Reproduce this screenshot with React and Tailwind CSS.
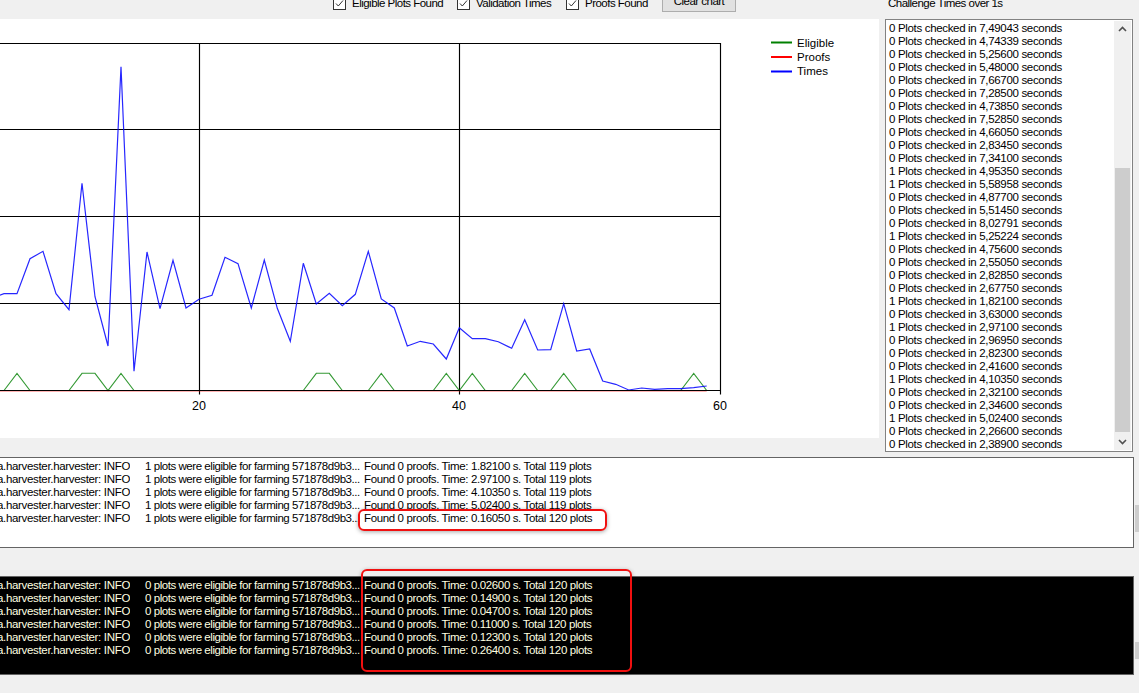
const blue = [[-9,298],[4,293.7],[17,293.7],[30,258.7],[43,251.3],[56,293.7],[69,309.7],[82,183.3],[95,296.7],[108,346],[121,66.7],[134,371.3],[147,252],[160,308.7],[173,260.3],[186,308],[199,299.3],[212,295.3],[225,257.3],[238,263.7],[251.3,308],[264.3,260],[277.3,308.3],[290.3,341.3],[303.3,263.3],[316.3,304],[329.3,293.3],[342.3,305.7],[355.3,294.3],[368.3,251.3],[381.3,299],[394.3,308],[407.3,346],[420.3,341.3],[433.3,344],[446.3,359],[459.3,327.7],[472.3,338.7],[485.3,338.7],[498.3,341.7],[511.7,348.3],[524.7,319.7],[537.7,350],[550.7,349.7],[563.7,303.7],[576.7,351],[589.7,349],[602.7,381],[615.7,384.3],[628.7,390],[641.7,388],[654.7,389.3],[667.7,388.7],[680.7,388.7],[693.7,387.7],[706.7,386]];
const B = 390.5, T = 373.3;
const green = [[-9,B],[4,B],[17,T],[30,B],[69,B],[82,T],[95,T],[108,B],[121,T],[134,B],[303.3,B],[316.3,T],[329.3,T],[342.3,B],[368.3,B],[381.3,T],[394.3,B],[433.3,B],[446.3,T],[459.3,B],[472.3,T],[485.3,B],[511.7,B],[524.7,T],[537.7,B],[550.7,B],[563.7,T],[576.7,B],[680.7,B],[693.7,T],[706.7,B]];
const pts = (a) => a.map(([x, y]) => `${x},${y}`).join(" ");

const listRows = [
  [0,"7,49043"],[0,"4,74339"],[0,"5,25600"],[0,"5,48000"],[0,"7,66700"],[0,"7,28500"],[0,"4,73850"],[0,"7,52850"],[0,"4,66050"],[0,"2,83450"],[0,"7,34100"],[1,"4,95350"],[1,"5,58958"],[0,"4,87700"],[0,"5,51450"],[0,"8,02791"],[1,"5,25224"],[0,"4,75600"],[0,"2,55050"],[0,"2,82850"],[0,"2,67750"],[1,"1,82100"],[0,"3,63000"],[1,"2,97100"],[0,"2,96950"],[0,"2,82300"],[0,"2,41600"],[1,"4,10350"],[0,"2,32100"],[0,"2,34600"],[1,"5,02400"],[0,"2,26600"],[0,"2,38900"],
];
const log1 = [["1.82100",119],["2.97100",119],["4.10350",119],["5.02400",119],["0.16050",120]];
const log2 = [["0.02600",120],["0.14900",120],["0.04700",120],["0.11000",120],["0.12300",120],["0.26400",120]];

function Check({ label, width }) {
  return (
    <div className="flex items-center" style={{ width }}>
      <span className="flex h-[13px] w-[13px] shrink-0 items-center justify-center border border-[#333] bg-white">
        <svg width="11" height="11" viewBox="0 0 11 11" fill="none" stroke="#333" strokeWidth="1"><path d="M2 5.5 L4.3 8 L9 2.5" /></svg>
      </span>
      <span className="ml-[6px] whitespace-nowrap">{label}</span>
    </div>
  );
}

function LogRow({ n, time, total }) {
  return (
    <div className="flex h-[13px] items-center whitespace-nowrap leading-[13px]">
      <div className="flex w-[130px] shrink-0 justify-end overflow-hidden">
        <span>chia.harvester.harvester: INFO</span>
      </div>
      <span className="ml-[15px] w-[219px] shrink-0 tracking-[-0.45px]">{n} plots were eligible for farming 571878d9b3...</span>
      <span className="tracking-[-0.37px]">Found 0 proofs. Time: {time} s. Total {total} plots</span>
    </div>
  );
}

export default function App() {
  return (
    <div className="relative flex h-[693px] w-[1139px] flex-col overflow-hidden bg-[#f0f0f0] font-['Liberation_Sans',sans-serif] text-[11.5px] tracking-[-0.33px] text-black">
      <div className="flex h-[19px] shrink-0 items-end overflow-hidden pb-[7px] tracking-[-0.52px]">
        <div className="ml-[333px] flex items-end">
          <div className="flex items-center">
            <Check label="Eligible Plots Found" width="124px" />
            <Check label="Validation Times" width="109px" />
            <Check label="Proofs Found" width="96px" />
          </div>
          <div className="flex h-[24px] w-[74px] items-center justify-center border border-[#adadad] bg-[#e1e1e1] pt-[4px]">Clear chart</div>
        </div>
        <span className="ml-[152px] whitespace-nowrap">Challenge Times over 1s</span>
      </div>

      <div className="flex items-start">
        <div className="h-[419px] w-[879px] shrink-0 bg-white">
          <svg width="879" height="419" viewBox="0 19 879 419" className="block" fontFamily="Liberation Sans" fontSize="11.5" fill="#000" letterSpacing="0">
            <path d="M0 43.5H720.5M0 129.5H720.5M0 216.5H720.5M0 303.5H720.5" stroke="#000" strokeWidth="1.15" fill="none" />
            <path d="M199.5 43V394.5M459.5 43V394.5M720.5 43V394.5" stroke="#000" strokeWidth="1.15" fill="none" />
            <polyline points={pts(green)} fill="none" stroke="#008000" strokeWidth="1.1" strokeOpacity="0.8" />
            <polyline points={pts(blue)} fill="none" stroke="#0000ff" strokeWidth="1.2" strokeOpacity="0.85" />
            <path d="M0 390.5H720.5" stroke="#000" strokeWidth="1.15" fill="none" />
            <path d="M0 391.5H706.7" stroke="#ff0000" strokeOpacity="0.3" strokeWidth="1" fill="none" />
            <text x="199" y="410" textAnchor="middle" fontSize="12.5">20</text>
            <text x="459" y="410" textAnchor="middle" fontSize="12.5">40</text>
            <text x="720" y="410" textAnchor="middle" fontSize="12.5">60</text>
            <path d="M771 42.5H792" stroke="#008000" strokeWidth="2" />
            <path d="M771 57H792" stroke="#ff0000" strokeWidth="2" />
            <path d="M771 71.5H792" stroke="#0000ff" strokeWidth="2" />
            <text x="797" y="47">Eligible</text>
            <text x="797" y="61">Proofs</text>
            <text x="797" y="75">Times</text>
          </svg>
        </div>

        <div className="relative ml-[6px] flex h-[433px] w-[248px] shrink-0 border border-[#828282] bg-white">
          <div className="flex-1 overflow-hidden pl-[3px] pt-[2px]">
            {listRows.map(([n, t], i) => (
              <div key={i} className="h-[13px] whitespace-nowrap leading-[13px]">{n} Plots checked in {t} seconds</div>
            ))}
          </div>
          <div className="my-px mr-[1px] flex w-[17px] shrink-0 flex-col bg-[#f0f0f0]">
            <div className="flex h-[17px] items-center justify-center">
              <svg width="9" height="6" viewBox="0 0 9 6" fill="none" stroke="#505050" strokeWidth="1.6"><path d="M1 5 L4.5 1.5 L8 5" /></svg>
            </div>
            <div className="mx-[1px] mt-[130px] h-[266px] bg-[#cdcdcd]" />
            <div className="mt-[1px] flex h-[17px] items-center justify-center">
              <svg width="9" height="6" viewBox="0 0 9 6" fill="none" stroke="#505050" strokeWidth="1.6"><path d="M1 1 L4.5 4.5 L8 1" /></svg>
            </div>
          </div>
        </div>
      </div>

      <div className="mt-[5px] flex h-[91px] shrink-0 items-start">
        <div className="relative h-[91px] w-[1134px] shrink-0 border border-[#646464] border-l-0 bg-white pt-[2px]">
          {log1.map(([t, n], i) => <LogRow key={i} n={1} time={t} total={n} />)}
          <div className="absolute left-[358px] top-[51px] h-[22px] w-[249px] rounded-[6px] border-2 border-[#f01010] shadow-[0_1px_4px_rgba(0,0,0,0.35)]" />
        </div>
        <div className="ml-[1px] mt-[48px] h-[27px] w-[4px] bg-[#cdcdcd]" />
      </div>

      <div className="mt-[28px] flex h-[99px] shrink-0 items-start">
        <div className="relative h-[99px] w-[1134px] shrink-0 border border-[#646464] border-l-0 bg-black pt-[2px] text-[#ffffe0]">
          {log2.map(([t, n], i) => <LogRow key={i} n={0} time={t} total={n} />)}
          <div className="absolute left-[361px] top-[-8px] h-[103px] w-[271px] rounded-[6px] border-2 border-[#f01010] shadow-[0_1px_4px_rgba(0,0,0,0.3)]" />
        </div>
        <div className="ml-[1px] mt-[66px] h-[17px] w-[4px] bg-[#cdcdcd]" />
      </div>
    </div>
  );
}
